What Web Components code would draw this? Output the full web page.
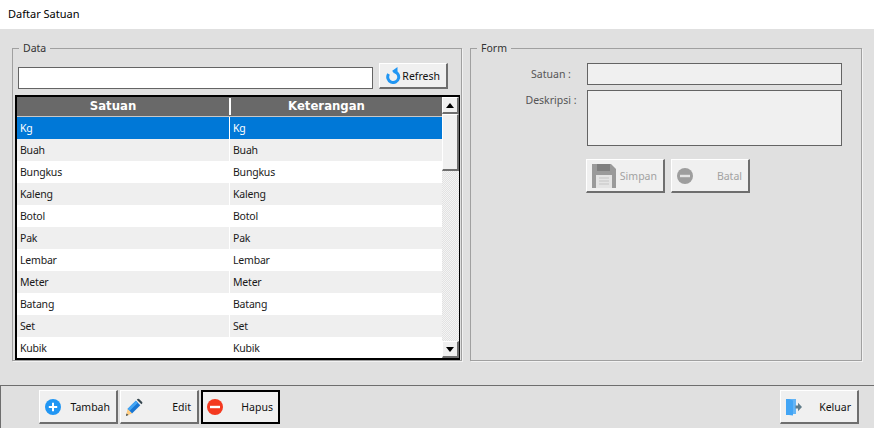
<!DOCTYPE html>
<html>
<head>
<meta charset="utf-8">
<title>Daftar Satuan</title>
<style>
html, body { margin: 0; padding: 0; }
body { width: 874px; height: 428px; overflow: hidden; background: #e0e0e0; font: 10.5px "Noto Sans", "DejaVu Sans", sans-serif; color: #111; }
</style>
</head>
<body>
<satuan-app></satuan-app>

<script>
// ikon-ikon tombol
const ICONS = {
    refresh: `<svg width="16" height="17" viewBox="0 0 16 17"><path d="M8.500 4.500A5.500 5.500 0 1 1 3.600 7" fill="none" stroke="#2196f3" stroke-width="3"/><path d="M12.500 0v8L7 4z" fill="#2196f3"/></svg>`,
    plus: `<svg width="16" height="16" viewBox="0 0 16 16"><circle cx="8" cy="8" r="8" fill="#2196f3"/><path d="M8 3.800v8.400M3.800 8h8.400" stroke="#fff" stroke-width="2"/></svg>`,
    pencil: `<svg width="17" height="18" viewBox="0 0 17 18"><path d="M1.500 11 9.800 2.700l4.500 4.500L6 15.500z" fill="#1976d2"/><path d="M1.500 11 9.800 2.700l2 2L3.500 13z" fill="#42a5f5"/><path d="M10.800 1.700l.7-.7a1.200 1.200 0 0 1 1.600 0l3 3a1.200 1.200 0 0 1 0 1.600l-.7.700z" fill="#37474f"/><path d="M1.500 11 0 18l6-2.500z" fill="#ffcc80"/><path d="M.5 15.600 0 18l2.500-1z" fill="#37474f"/></svg>`,
    minus: `<svg width="16" height="16" viewBox="0 0 16 16"><circle cx="8" cy="8" r="8" fill="#f4391f"/><rect x="3" y="6.800" width="10" height="2.400" fill="#fff"/></svg>`,
    minusGrey: `<svg width="16" height="16" viewBox="0 0 16 16"><circle cx="8" cy="8" r="8" fill="#9e9e9e"/><rect x="3" y="6.800" width="10" height="2.400" fill="#e4e4e4"/></svg>`,
    save: `<svg width="24" height="24" viewBox="0 0 24 24"><path d="M0 0h19l5 5v19H0z" fill="#9a9a9a"/><rect x="5" y="0" width="13" height="7" fill="#7f7f7f"/><path d="M4 11h16v13H4z" fill="#e4e4e4"/><path d="M7 14h10M7 17h10M7 20h10" stroke="#c4c4c4"/></svg>`,
    exit: `<svg width="16" height="18" viewBox="0 0 16 18"><path d="M0 1h10v15H0z" fill="#64b5f6"/><path d="M0 1h3l4 1.500V17.400L3 17H0z" fill="#42a5f5"/><path d="M9.500 7.500H12V4.800L16 9l-4 4.200V10.500H9.500z" fill="#607d8b"/></svg>`
};

// judul jendela
class TitleBar extends HTMLElement {
    constructor() {
        super();
        this.attachShadow({ mode: 'open' });
        this.shadowRoot.innerHTML = `
            <style>
                :host { display: flex; align-items: center; height: 29px; box-sizing: border-box; padding: 0 8px 2px; background: #fff; color: #000; font-size: 11px; }
            </style>
            <slot></slot>
        `;
    }
}

// kotak grup dengan legend
class GroupBox extends HTMLElement {
    constructor() {
        super();
        this.attachShadow({ mode: 'open' });
        const label = this.getAttribute('label');
        this.shadowRoot.innerHTML = `
            <style>
                :host { display: block; box-sizing: border-box; color: #333; }
                fieldset { box-sizing: border-box; height: 100%; margin: 0; border: 1px solid #a0a0a0; padding: 0; box-shadow: 1px 1px 0 #f2f2f2; }
                legend { margin-left: 6px; padding: 0 4px; height: 14px; line-height: 14px; font-size: 10.500px; }
            </style>
            <fieldset>
                <legend>${label}</legend>
                <slot></slot>
            </fieldset>
        `;
    }
}

// tombol dengan ikon
class IconButton extends HTMLElement {
    constructor() {
        super();
        this.attachShadow({ mode: 'open' });
        const icon = ICONS[this.getAttribute('icon')] || '';
        this.shadowRoot.innerHTML = `
            <style>
                :host { display: flex; align-items: center; justify-content: space-between; box-sizing: border-box; width: 79px; height: 34px; padding: 0 6px 0 5px; background: #f0f0f0; color: #111; font-size: 10.500px; border-style: solid; border-width: 1px 2px 2px 1px; border-color: #fff #6e6e6e #6e6e6e #fff; }
                :host([compact]) { width: 69px; height: 26px; padding: 0 6px 0 5px; }
                :host([disabled]) { color: #a2a2a2; }
                :host([focused]) { border: 2px solid #000; padding: 0 5px 0 4px; }
                svg { display: block; flex: none; }
            </style>
            ${icon}
            <slot></slot>
        `;
    }
}

// input teks (dan textarea)
class TextBox extends HTMLElement {
    constructor() {
        super();
        this.attachShadow({ mode: 'open' });
        this.shadowRoot.innerHTML = `
            <style>
                :host { display: block; box-sizing: border-box; height: 22px; border: 1px solid #646464; background: #fff; }
                :host([disabled]) { background: #f0f0f0; }
            </style>
        `;
    }
}

// baris pada form
class FormRow extends HTMLElement {
    constructor() {
        super();
        this.attachShadow({ mode: 'open' });
        const label = this.getAttribute('label');
        this.shadowRoot.innerHTML = `
            <style>
                :host { display: grid; grid-template-columns: 116px 255px; align-items: start; color: #555; font-size: 10.500px; }
                .label { text-align: center; line-height: 22px; padding: 0 4px 0 48px; }
                :host([tall]) .label { line-height: 20px; }
            </style>
            <div class="label">${label}</div>
            <slot></slot>
        `;
    }
}

// scrollbar vertikal
class ScrollBar extends HTMLElement {
    constructor() {
        super();
        this.attachShadow({ mode: 'open' });
        this.shadowRoot.innerHTML = `
            <style>
                :host { display: flex; flex-direction: column; box-sizing: border-box; width: 17px; background: conic-gradient(#f4f4f4 25%, #e2e2e2 0 50%, #f4f4f4 0 75%, #e2e2e2 0) 0 0 / 2px 2px; }
                .btn, .thumb { box-sizing: border-box; flex: none; display: flex; align-items: center; justify-content: center; background: #f0f0f0; border-style: solid; border-width: 1px 2px 2px 1px; border-color: #fff #6e6e6e #6e6e6e #fff; }
                .btn { height: 17px; }
                .thumb { height: 57px; }
                .track { flex: 1; }
                i { width: 0; height: 0; border: 4px solid transparent; border-top: 0; border-bottom: 5px solid #000; }
                i.down { border-bottom: 0; border-top: 5px solid #000; }
            </style>
            <div class="btn"><i></i></div>
            <div class="thumb"></div>
            <div class="track"></div>
            <div class="btn"><i class="down"></i></div>
        `;
    }
}

// tabel data
class DataGrid extends HTMLElement {
    constructor() {
        super();
        this.attachShadow({ mode: 'open' });
        const rows = ['Kg', 'Buah', 'Bungkus', 'Kaleng', 'Botol', 'Pak', 'Lembar', 'Meter', 'Batang', 'Set', 'Kubik'];
        const body = rows.map((r, i) => `
            <div class="row ${i === 0 ? 'selected' : ''}">
                <div class="cell">${r}</div><div class="cell">${r}</div>
            </div>`).join('');
        this.shadowRoot.innerHTML = `
            <style>
                :host { display: flex; box-sizing: border-box; width: 445px; height: 265px; border: 2px solid #000; border-right-width: 1px; background: #fff; overflow: hidden; color: #1a1a1a; font-size: 10.500px; letter-spacing: -.2px; }
                .table { flex: 1; min-width: 0; overflow: hidden; }
                .head { display: grid; grid-template-columns: 214px 1fr; height: 20px; box-sizing: border-box; background: #696969; border-bottom: 1px solid #c8c8c8; color: #fff; font: bold 11.700px "DejaVu Sans", sans-serif; letter-spacing: 0; }
                .head div { box-sizing: border-box; text-align: center; padding-right: 20px; border-right: 2px solid #fff; margin: 1px 0; line-height: 17px; }
                .head div:last-child { border-right: 0; }
                .row { display: grid; grid-template-columns: 213px 1fr; height: 22px; line-height: 22px; background: #fff; }
                .row:nth-child(even) { background: #efefef; }
                .row.selected { background: #0078d7; color: #fff; }
                .cell { padding-left: 3px; border-right: 1px solid #fff; }
                .cell:last-child { border-right: 0; }
            </style>
            <div class="table">
                <div class="head"><div>Satuan</div><div>Keterangan</div></div>
                <div>${body}</div>
            </div>
            <scroll-bar></scroll-bar>
        `;
    }
}

// halaman utama
class SatuanApp extends HTMLElement {
    constructor() {
        super();
        this.attachShadow({ mode: 'open' });
        this.shadowRoot.innerHTML = `
            <style>
                :host { display: flex; flex-direction: column; height: 428px; }
                .main { flex: none; height: 356px; box-sizing: border-box; display: flex; gap: 8px; padding: 12px 12px 24px; }
                #data { width: 450px; }
                #form { width: 392px; }
                .data-body { display: flex; flex-direction: column; padding: 0 0 0 2px; }
                .search { display: flex; align-items: flex-end; gap: 6px; padding: 0 13px 0 3px; height: 33px; margin-top: 1px; }
                .search text-box { width: 355px; }
                .grid-wrap { margin-top: 6px; }
                .form-body { display: flex; flex-direction: column; padding: 8px 0 0 0; }
                .gap { margin-top: 5px; }
                #desc { height: 56px; }
                .form-btns { display: flex; gap: 6px; padding: 13px 0 0 115px; }
                .footer { flex: 1; display: flex; align-items: flex-start; gap: 2px; box-sizing: border-box; border-top: 1px solid #6e6e6e; border-left: 1px solid #6e6e6e; padding: 4px 15px 0 38px; }
                .spacer { flex: 1; }
            </style>
            <title-bar>Daftar Satuan</title-bar>
            <div class="main">
                <group-box id="data" label="Data">
                    <div class="data-body">
                        <div class="search">
                            <text-box></text-box>
                            <icon-button compact icon="refresh">Refresh</icon-button>
                        </div>
                        <div class="grid-wrap"><data-grid></data-grid></div>
                    </div>
                </group-box>
                <group-box id="form" label="Form">
                    <div class="form-body">
                        <form-row label="Satuan :"><text-box disabled></text-box></form-row>
                        <form-row class="gap" tall label="Deskripsi :"><text-box id="desc" disabled></text-box></form-row>
                        <div class="form-btns">
                            <icon-button disabled icon="save">Simpan</icon-button>
                            <icon-button disabled icon="minusGrey">Batal</icon-button>
                        </div>
                    </div>
                </group-box>
            </div>
            <div class="footer">
                <icon-button icon="plus">Tambah</icon-button>
                <icon-button icon="pencil">Edit</icon-button>
                <icon-button focused icon="minus">Hapus</icon-button>
                <div class="spacer"></div>
                <icon-button icon="exit">Keluar</icon-button>
            </div>
        `;
    }
}

// daftarkan elemen (anak dulu, lalu induk)
customElements.define('title-bar', TitleBar);
customElements.define('group-box', GroupBox);
customElements.define('icon-button', IconButton);
customElements.define('text-box', TextBox);
customElements.define('form-row', FormRow);
customElements.define('scroll-bar', ScrollBar);
customElements.define('data-grid', DataGrid);
customElements.define('satuan-app', SatuanApp);
</script>
</body>
</html>
